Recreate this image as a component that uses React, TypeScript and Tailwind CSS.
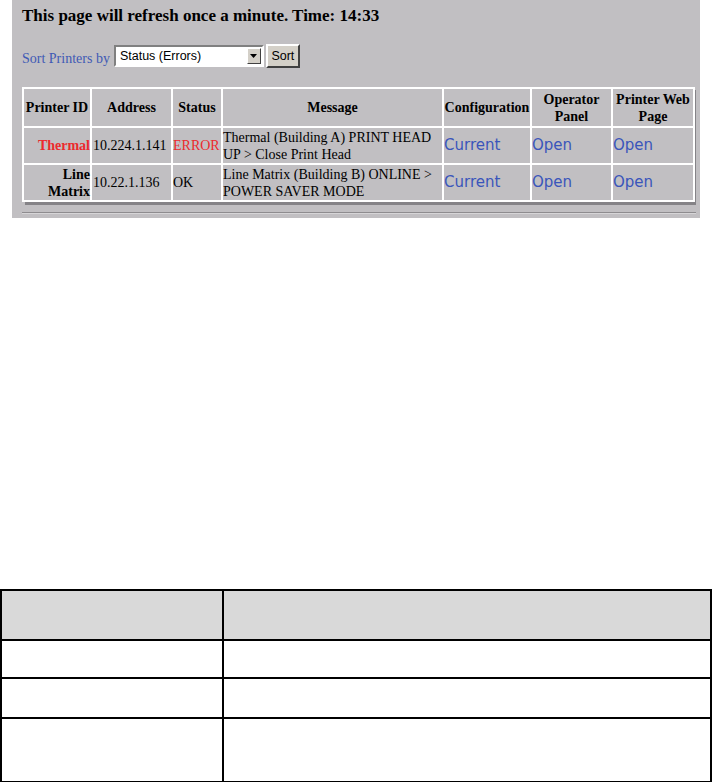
import React from "react";

const serif = "font-['Liberation_Serif','Times_New_Roman',serif]";
const link = "font-['DejaVu_Sans','Verdana',sans-serif] text-[15px] text-[#3a55bb]";

const printers = [
  {
    id: ["Thermal"],
    red: true,
    address: "10.224.1.141",
    status: "ERROR",
    message: ["Thermal (Building A) PRINT HEAD", "UP > Close Print Head"],
  },
  {
    id: ["Line", "Matrix"],
    red: false,
    address: "10.22.1.136",
    status: "OK",
    message: ["Line Matrix (Building B) ONLINE >", "POWER SAVER MODE"],
  },
];

function SelectBox() {
  return (
    <div className="flex h-[22px] w-[150px] items-stretch border-2 border-t-[#808080] border-l-[#808080] border-b-white border-r-white bg-white">
      <div className="flex flex-1 items-center pl-[4px] font-['Liberation_Sans',Arial,sans-serif] text-[12.5px] text-black">
        Status (Errors)
      </div>
      <div className="my-px mr-px flex w-[14px] items-center justify-center border border-t-white border-l-white border-b-[#404040] border-r-[#404040] bg-[#d4d0c8]">
        <svg width="7" height="4" viewBox="0 0 7 4">
          <path d="M0 0h7L3.5 4z" fill="#000" />
        </svg>
      </div>
    </div>
  );
}

export default function App() {
  return (
    <div className="min-h-[782px] bg-white">
      {/* Gray status panel */}
      <div className={`ml-[12px] h-[218px] w-[688px] bg-[#c1bfc2] pl-[10px] ${serif}`}>
        <h1 className="pt-[7px] text-[17px] font-bold leading-[18px] text-black">
          This page will refresh once a minute. Time: 14:33
        </h1>

        <div className="mt-[19px] flex h-[24px] items-center">
          <span className="mt-[4px] text-[14px] text-[#3f5ab5]">Sort Printers by</span>
          <div className="ml-[4px]">
            <SelectBox />
          </div>
          <button className="ml-[2px] h-[24px] w-[34px] border-2 border-t-white border-l-white border-b-[#404040] border-r-[#404040] bg-[#d4d0c8] font-['Liberation_Sans',Arial,sans-serif] text-[12.5px] text-black">
            Sort
          </button>
        </div>

        <div className="mt-[19px] w-[671px] shadow-[3px_3px_0_#858387]">
          <table className="w-[671px] table-fixed border-collapse border-2 border-white text-[14px] leading-[17px] text-black">
            <colgroup>
              <col className="w-[68px]" />
              <col className="w-[81px]" />
              <col className="w-[50px]" />
              <col className="w-[221px]" />
              <col className="w-[88px]" />
              <col className="w-[81px]" />
              <col className="w-[82px]" />
            </colgroup>
            <thead>
              <tr className="h-[39px]">
                <th className="border-2 border-white px-0 text-center font-bold">Printer ID</th>
                <th className="border-2 border-white px-0 text-center font-bold">Address</th>
                <th className="border-2 border-white px-0 text-center font-bold">Status</th>
                <th className="border-2 border-white px-0 text-center font-bold">Message</th>
                <th className="border-2 border-white px-0 text-center font-bold">Configuration</th>
                <th className="border-2 border-white px-0 text-center font-bold">
                  Operator
                  <br />
                  Panel
                </th>
                <th className="border-2 border-white px-0 text-center font-bold">
                  Printer Web
                  <br />
                  Page
                </th>
              </tr>
            </thead>
            <tbody>
              {printers.map((p) => (
                <tr key={p.address} className="h-[37px]">
                  <td
                    className={`border-2 border-white px-0 text-right font-bold ${
                      p.red ? "text-[#ec2a2d]" : "text-black"
                    }`}
                  >
                    {p.id.map((line, i) => (
                      <div key={i}>{line}</div>
                    ))}
                  </td>
                  <td className="border-2 border-white px-[1px]">{p.address}</td>
                  <td className={`border-2 border-white px-0 ${p.red ? "text-[#ec2a2d]" : ""}`}>
                    {p.status}
                  </td>
                  <td className="whitespace-nowrap border-2 border-white px-0">
                    {p.message.map((line, i) => (
                      <div key={i}>{line}</div>
                    ))}
                  </td>
                  <td className="border-2 border-white px-0">
                    <a className={link}>Current</a>
                  </td>
                  <td className="border-2 border-white px-0">
                    <a className={link}>Open</a>
                  </td>
                  <td className="border-2 border-white px-0">
                    <a className={link}>Open</a>
                  </td>
                </tr>
              ))}
            </tbody>
          </table>
        </div>

        <div className="mr-[4px] mt-[10px] border-t border-b border-t-[#8e8c8f] border-b-[#d6d5d7]" />
      </div>

      {/* Empty grid table */}
      <div className="mt-[371px] border-2 border-black">
        <div className="flex h-[48px] bg-[#d9d9d9]">
          <div className="w-[222px] border-r-2 border-black" />
          <div className="flex-1" />
        </div>
        <div className="flex h-[38px] border-t-2 border-black">
          <div className="w-[222px] border-r-2 border-black" />
          <div className="flex-1" />
        </div>
        <div className="flex h-[40px] border-t-2 border-black">
          <div className="w-[222px] border-r-2 border-black" />
          <div className="flex-1" />
        </div>
        <div className="flex h-[64px] border-t-2 border-black">
          <div className="w-[222px] border-r-2 border-black" />
          <div className="flex-1" />
        </div>
      </div>
    </div>
  );
}
